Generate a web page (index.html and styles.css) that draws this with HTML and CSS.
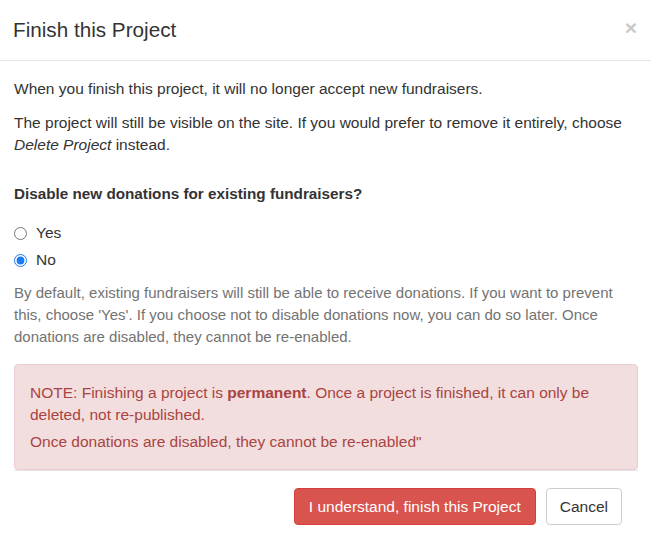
FILE: index.html
```html
<!DOCTYPE html>
<html>
<head>
<meta charset="utf-8">
<link rel="stylesheet" href="styles.css">
</head>
<body>
<div class="modal">
  <div class="modal-header">
    <h4 class="modal-title">Finish this Project</h4>
    <span class="close">×</span>
  </div>
  <div class="modal-body">
    <p class="p1">When you finish this project, it will no longer accept new fundraisers.</p>
    <p class="p2">The project will still be visible on the site. If you would prefer to remove it entirely, choose <em>Delete Project</em> instead.</p>
    <div class="question">Disable new donations for existing fundraisers?</div>
    <label class="radio"><input type="radio" name="disable"> <span>Yes</span></label>
    <label class="radio"><input type="radio" name="disable" checked> <span>No</span></label>
    <p class="help">By default, existing fundraisers will still be able to receive donations. If you want to prevent this, choose 'Yes'. If you choose not to disable donations now, you can do so later. Once donations are disabled, they cannot be re-enabled.</p>
    <div class="alert">
      <p>NOTE: Finishing a project is <strong>permanent</strong>. Once a project is finished, it can only be deleted, not re-published.</p>
      <p>Once donations are disabled, they cannot be re-enabled"</p>
    </div>
  </div>
  <div class="modal-footer">
    <button class="btn btn-danger">I understand, finish this Project</button>
    <button class="btn btn-default">Cancel</button>
  </div>
</div>
</body>
</html>
```
FILE: styles.css
```css
* { box-sizing: border-box; }
html, body { margin: 0; padding: 0; background: #fff; }
body {
  font-family: "Liberation Sans", Arial, Helvetica, sans-serif;
  font-size: 15.5px;
  line-height: 22px;
  color: #333;
}
.modal { width: 651px; }
.modal-header {
  display: flex;
  align-items: center;
  justify-content: space-between;
  height: 61px;
  padding: 0 14px 0 13px;
  border-bottom: 1px solid #e5e5e5;
}
.modal-title {
  margin: 0;
  font-size: 20.7px;
  font-weight: normal;
  line-height: 26px;
  color: #333;
}
.close {
  font-size: 21px;
  font-weight: bold;
  color: #c9c9c9;
  line-height: 21px;
  margin-top: -6px;
}
.modal-body { padding: 17px 13px 0 14px; }
.modal-body p { margin: 0; }
.p1 { margin-bottom: 12px !important; }
.p2 { margin-bottom: 27px !important; }
.question { font-weight: bold; font-size: 15.25px; margin-bottom: 17px; }
.radio {
  display: flex;
  align-items: center;
  height: 22px;
  margin-bottom: 5px;
}
.radio input {
  margin: 0 9px 0 0;
  width: 13px;
  height: 13px;
  accent-color: #1a7cf3;
}
.radio + .radio { margin-bottom: 11px; }
.help { color: #737373; font-size: 15px; margin-bottom: 16px !important; }
.alert {
  background: #f2dede;
  border: 1px solid #ebccd1;
  border-radius: 4px;
  color: #a94442;
  padding: 17px 15px 16px 15px;
}
.alert p + p { margin-top: 5px; }
.modal-footer {
  margin: 0 13px 0 14px;
  border-top: 1px solid #e5e5e5;
  padding: 17px 16px 0 0;
  display: flex;
  justify-content: flex-end;
  gap: 10px;
}
.btn {
  font-family: inherit;
  font-size: 15.5px;
  line-height: 21px;
  padding: 7px 14px;
  border-radius: 4px;
  border: 1px solid transparent;
  cursor: pointer;
}
.btn-danger { background: #d9534f; border-color: #d43f3a; color: #fff; }
.btn-default { background: #fff; border-color: #ccc; color: #333; padding: 7px 13px; }
```
